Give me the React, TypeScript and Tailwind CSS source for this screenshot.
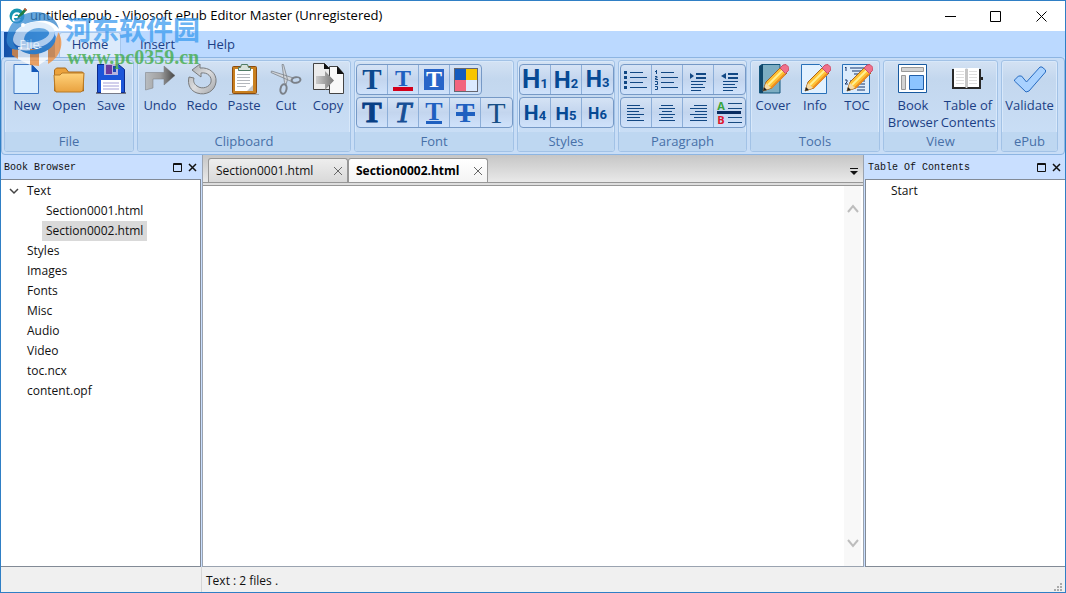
import type { ReactNode } from "react";

const icons: Record<string, ReactNode> = {
  New: (
    <>
      <path d="M3 1.500h17.500l7 7V30.500H3z" fill="#d9edff" stroke="#3f78c4" />
      <path d="M20.500 1v8H28z" fill="#1458b8" />
    </>
  ),
  Open: (
    <>
      <path d="M1.500 28V7l2-2h9l3 4h14l1 2v17z" fill="#eba23c" stroke="#a8691c" />
      <path d="M1 12h6l2-2h22l-1 17-2 2H3l-1-2z" fill="url(#folder)" stroke="#b87a26" />
    </>
  ),
  Save: (
    <>
      <path d="M1 30h30" stroke="#777b88" strokeWidth="2" />
      <path d="M2.500 1.500h21l6 5V29.500h-27z" fill="#1c56d9" stroke="#0b2a8c" />
      <path d="M9 1h14v11H9z" fill="#b8b5df" />
      <path d="M11 2h6v9h-6z" fill="#6c3b9e" />
      <path d="M18 3h3v6h-3z" fill="#1c48b7" />
      <path d="M6 17h20v13H6z" fill="#fff" />
      <path d="M8 20h16M8 23h16M8 26h16" stroke="#a5a0d8" />
    </>
  ),
  Undo: (
    <path d="M1.500 27V9.500H20V3l11 9.500L20 22v-6H9v9z" fill="url(#steel)" stroke="#76797c" strokeWidth=".5" />
  ),
  Redo: (
    <path d="M14 1 6 7l9 7v-4c7-1 11 4 10 9s-9 8-14 4c-3-2-4-5-3-8l-5-1c-2 8 2 14 8 16 9 3 18-2 19-11S23 4 14 5z" fill="url(#ring)" stroke="#797b7d" />
  ),
  Paste: (
    <>
      <path d="M1 31.500h30" stroke="#9ba9b8" />
      <rect x="4.500" y="3.500" width="24" height="27" rx="1" fill="#c9801f" stroke="#8b4c10" />
      <path d="M7 6h18v22H7z" fill="#fff" />
      <path d="M9 11.500h13M9 14.500h13M9 17.500h13M9 20.500h13M9 23.500h9" stroke="#b4b8bd" />
      <path d="M10.500 4.500h2l1-3h6l1 3h2v3h-12z" fill="#d8e1db" stroke="#4f7c64" />
      <path d="m19 28 6-6v6z" fill="#c4c7cb" />
    </>
  ),
  Cut: (
    <>
      <path d="M12 1.500h1.500l4 15-1.500 5-1.500-2zM1.500 8l22 7-2 3.500L1 9.500z" fill="#d2d6db" stroke="#7e848c" strokeWidth=".8" />
      <ellipse cx="26" cy="17" rx="4.500" ry="2.800" fill="none" stroke="#7b8189" strokeWidth="2" transform="rotate(-8 26 17)" />
      <ellipse cx="13.500" cy="26" rx="3" ry="4.800" fill="none" stroke="#7b8189" strokeWidth="2" transform="rotate(12 13.500 26)" />
    </>
  ),
  Copy: (
    <>
      <path d="M1.500.500h11l6 6v20h-17z" fill="#ececec" stroke="#444" />
      <path d="M17.500 3.500h8l6 7v20h-14z" fill="#f8f8f8" stroke="#444" />
      <path d="M25 3v8h7z" fill="#111" />
      <path d="M12 0v6h6z" fill="#111" />
      <path d="M4 13h9V8l9 9.500-9 9.500v-6H4z" fill="url(#mid)" />
    </>
  ),
  Cover: (
    <>
      <path d="M2.500 3 5 1.500h18V30H2.500z" fill="#7cadc2" stroke="#15567c" />
      <path d="M3 3 6 1v29H3z" fill="#10476a" />
      <use href="#pencil" />
    </>
  ),
  Info: (
    <>
      <path d="M2.500 1.500h18l7 7v22h-25z" fill="#e2f1ff" stroke="#2870b8" />
      <use href="#pencil" />
    </>
  ),
  TOC: (
    <>
      <path d="M1.500 1.500h27v29h-27z" fill="#dcecfc" stroke="#2870b8" />
      <path d="M9 5h15M11 8h12M13 11h10M9 18h15M12 21h12M14 24h10M16 27h8" stroke="#15356c" />
      <path d="m4 5 1-1v4M4 17h2v2l-2 2h3" fill="none" stroke="#15356c" />
      <use href="#pencil" />
    </>
  ),
  "Book Browser": (
    <>
      <path d="M1.500 1.500h28v28h-28z" fill="#fff" stroke="#17599f" />
      <path d="M4.500 4.500h22v4h-22zM4.500 12.500h4v14h-4z" fill="#d3d3d3" stroke="#999" />
      <path d="M12.500 12.500h14v14h-14z" fill="#8cc4ff" stroke="#225fa8" />
    </>
  ),
  "Table of Contents": (
    <>
      <path d="M0 6h29v20H0z" fill="#292929" />
      <path d="M2 5h11l1.500 1L16 5h11v19H16l-1.500 1-1.500-1H2z" fill="#fff" />
      <path d="M13 6h3v18h-3z" fill="#c6c6c6" />
      <path d="M4 8.500h8M4 11.500h8M4 14.500h8M4 17.500h8M4 20.500h8M17 8.500h8M17 11.500h8M17 14.500h8M17 17.500h8M17 20.500h8" stroke="#dedede" />
      <path d="M29 14h2v3h-2z" fill="#222" />
    </>
  ),
  Validate: (
    <path d="m.500 17 4-4h3l5 6L26 4h2l3.500 3v2L15 28l-3 1L.500 18z" fill="#a9d2ff" stroke="#276bc0" />
  ),
};

function Defs() {
  return (
    <svg className="absolute size-0" aria-hidden="true">
      <defs>
        <linearGradient id="folder" x2="0" y2="1"><stop stopColor="#ffd27b" /><stop offset="1" stopColor="#e9a23f" /></linearGradient>
        <linearGradient id="steel" x2="1" y2="0"><stop stopColor="#b8bcc0" /><stop offset=".5" stopColor="#a0a0a0" /><stop offset="1" stopColor="#454545" /></linearGradient>
        <linearGradient id="ring" x2="1" y2="1"><stop stopColor="#a5a8ab" /><stop offset=".5" stopColor="#dcdddf" /><stop offset="1" stopColor="#a3a5a8" /></linearGradient>
        <linearGradient id="mid" x2="1" y2="0"><stop stopColor="#ccc" /><stop offset="1" stopColor="#777" /></linearGradient>
        <linearGradient id="ball" x2="1" y2="1"><stop stopColor="#3a93dc" /><stop offset="1" stopColor="#2b76bd" /></linearGradient>
        <g id="pencil">
          <path d="m6 28 3-9L24 4l6 6-15 15z" fill="#ffc235" stroke="#a76520" />
          <path d="m11 22 15-15" stroke="#fff093" strokeWidth="2" />
          <path d="m14 25 14-14" stroke="#ed8f22" strokeWidth="2" />
          <path d="m23 5 3-3 3-.500 3 3-.500 3-3 3z" fill="#f0708b" stroke="#c94e68" />
          <path d="m6 28 3-8 5 5z" fill="#f4dba8" />
          <path d="m6 28 1-4 3 3z" fill="#222" />
        </g>
      </defs>
    </svg>
  );
}

function Tool({ name, wide = false }: { name: string; wide?: boolean }) {
  return (
    <button className={`flex flex-col items-center ${wide ? "w-[55px]" : "w-[42px]"}`}>
      <svg viewBox="0 0 32 32" className="size-8">{icons[name]}</svg>
      <span className="mt-0.5 text-center text-[13px] leading-[17px] text-[#1b3f85]">{name}</span>
    </button>
  );
}

function Group({ title, className, children }: { title: string; className: string; children: ReactNode }) {
  return (
    <section className={`flex shrink-0 flex-col overflow-hidden rounded-[3px] border border-[#a2c2e6] bg-linear-to-b from-[#d4e2f3] from-0% via-[#c3d7ee] via-20% to-[#cbe0f8] shadow-[inset_0_0_0_1px_#d8e8fa] ${className}`}>
      <div className="flex min-h-0 flex-1 justify-center pt-0.5">{children}</div>
      <h2 className="h-[19px] shrink-0 bg-[#bed7f1] text-center text-[13px] leading-[19px] text-[#4770a8]">{title}</h2>
    </section>
  );
}

function Strip({ items }: { items: { label: string; view: ReactNode }[] }) {
  return (
    <div className="flex h-[31px] w-fit divide-x divide-[#8caed8] overflow-hidden rounded-[4px] border border-[#7699c6] bg-linear-to-b from-[#d5e3f5] via-[#c3d5ee] to-[#cfe2fb]">
      {items.map((i) => (
        <button key={i.label} aria-label={i.label} className="flex w-[31px] items-center justify-center">{i.view}</button>
      ))}
    </div>
  );
}

function Strips({ rows }: { rows: { label: string; view: ReactNode }[][] }) {
  return (
    <div className="flex w-full flex-col gap-0.5 px-px pt-px">
      {rows.map((r) => <Strip key={r[0].label} items={r} />)}
    </div>
  );
}

const serif = "font-['Liberation_Serif',serif]";
const glyph = (cls: string) => <span className={`${serif} leading-none ${cls}`}>T</span>;
const fontRows = [
  [
    { label: "Font", view: glyph("text-[29px] font-bold text-[#0d4a8f]") },
    { label: "Text colour", view: <span className="flex flex-col items-center"><span className={`${serif} text-[24px] leading-[18px] font-bold text-[#1f60c0]`}>T</span><i className="h-1 w-5 bg-[#d3001b]" /></span> },
    { label: "Highlight", view: <span className={`${serif} flex h-[21px] w-[20px] items-center justify-center bg-[#2865c8] text-[24px] leading-[21px] font-bold text-white`}>T</span> },
    { label: "Palette", view: <svg viewBox="0 0 24 24" className="size-6"><path d="M0 0h24v24H0z" fill="#65666f" /><path d="M1 1h11v11H1z" fill="#155bbd" /><path d="M12 1h11v11H12z" fill="#f7c500" /><path d="M1 12h11v11H1z" fill="#f2647f" /><path d="M12 12h11v11H12z" fill="#dceaff" /></svg> },
  ],
  [
    { label: "Bold", view: glyph("text-[29px] font-bold text-[#073f85] [-webkit-text-stroke:1px_#073f85]") },
    { label: "Italic", view: glyph("text-[29px] italic text-[#174f96] [-webkit-text-stroke:1px_#174f96]") },
    { label: "Underline", view: <span className="flex flex-col items-center"><span className={`${serif} text-[26px] leading-[19px] font-bold text-[#1f60c0]`}>T</span><i className="h-[3px] w-4 bg-[#1f60c0]" /></span> },
    { label: "Strikethrough", view: <span className="relative flex justify-center">{glyph("text-[28px] font-bold text-[#1f60c0]")}<i className="absolute top-[13px] h-1 w-[19px] bg-[#1f60c0]" /></span> },
    { label: "Plain", view: glyph("text-[30px] text-[#174f86]") },
  ],
];

const heading = (n: number, size: string) => (
  <span className="flex items-baseline pt-1 font-['Roboto',sans-serif] leading-6 font-bold text-[#064994]">
    <span className={size}>H</span><span className="text-[13px]">{n}</span>
  </span>
);
const styleRows = [
  [1, 2, 3].map((n) => ({ label: `Heading ${n}`, view: heading(n, ["text-[26px]", "text-[24px]", "text-[23px]"][n - 1]) })),
  [4, 5, 6].map((n) => ({ label: `Heading ${n}`, view: heading(n, ["text-[21px]", "text-[19px]", "text-[16px]"][n - 4]) })),
];

const lines = (d: string, extra?: ReactNode) => (
  <svg viewBox="0 0 26 24" className="h-6 w-[26px]" fill="none" stroke="#114783">
    <path d={d} />{extra}
  </svg>
);
const paraRows = [
  [
    { label: "Bullets", view: lines("M7 4.500h13M7 9.500h17M7 14.500h13M7 19.500h17", <path d="M1 4.500h3M1 9.500h3M1 14.500h3M1 19.500h3" strokeWidth="3" />) },
    { label: "Numbering", view: lines("M7 4.500h13M7 9.500h17M7 14.500h13M7 19.500h17", <path d="M1 3.500h1.500V2m0 0v4M1 8.500h2v1.500H1.500v1.500H4M1 13.500h2.500v3H1M1 18.500h2.500v3H1" />) },
    { label: "Indent", view: lines("M6 13.500h15M6 16.500h12M6 19.500h14M6 22.500h10", <><path d="M11 6h10M11 10h10" strokeWidth="2" /><path d="M5 5v6l4-3z" fill="#114783" stroke="none" /></>) },
    { label: "Outdent", view: lines("M6 13.500h15M6 16.500h12M6 19.500h14M6 22.500h10", <><path d="M11 6h10M11 10h10" strokeWidth="2" /><path d="M9 5v6L4 8z" fill="#114783" stroke="none" /></>) },
  ],
  [
    { label: "Align left", view: lines("M4 4.500h13M4 7.500h17M4 10.500h12M4 13.500h17M4 16.500h13M4 19.500h17") },
    { label: "Align centre", view: lines("M7 4.500h12M5 7.500h16M8 10.500h10M5 13.500h16M7 16.500h12M5 19.500h16") },
    { label: "Align right", view: lines("M9 4.500h13M5 7.500h17M10 10.500h12M5 13.500h17M9 16.500h13M5 19.500h17") },
    {
      label: "Spacing",
      view: (
        <span className="flex flex-col font-['Open_Sans',sans-serif] text-[11px] leading-[11px] font-bold">
          <span className="flex items-center gap-[3px] text-[#37a43b]">A<i className="h-[6px] w-3.5 border-y border-[#174a80]" /></span>
          <i className="h-[3px] w-6 bg-[#092c60]" />
          <span className="flex items-center gap-[3px] text-[#e0172d]">B<i className="h-[6px] w-3.5 border-y border-[#174a80]" /></span>
        </span>
      ),
    },
  ],
];

function PanelHeader({ title }: { title: string }) {
  return (
    <div className="flex h-6 shrink-0 items-center bg-[#c9dfff] pr-1 pl-[3px]">
      <h2 className="flex-1 font-['Liberation_Mono',monospace] text-[10px] text-[#111]">{title}</h2>
      <button aria-label={`Float ${title}`} className="mr-1.5"><svg viewBox="0 0 9 9" className="size-[9px]" fill="none" stroke="#111"><path d="M.500.500h8v8h-8zM0 1.500h9" /></svg></button>
      <button aria-label={`Close ${title}`}><svg viewBox="0 0 9 9" className="size-[9px]" stroke="#111" strokeWidth="1.500"><path d="m1 1 7 7M8 1 1 8" /></svg></button>
    </div>
  );
}

function FileTab({ name, active = false }: { name: string; active?: boolean }) {
  return (
    <div className={`flex h-6 w-[140px] items-center justify-between rounded-t-[3px] border border-b-0 border-[#979797] pr-1 pl-[7px] ${active ? "bg-linear-to-b from-white to-[#f4f4f4] font-bold text-black" : "bg-linear-to-b from-[#eeeeee] to-[#d9d9d9]"}`}>
      <button className="text-[12px] whitespace-nowrap">{name}</button>
      <button aria-label={`Close ${name}`}><svg viewBox="0 0 10 10" className="size-2.5" stroke="#666"><path d="m1 1 8 8M9 1 1 9" /></svg></button>
    </div>
  );
}

function Watermark() {
  return (
    <div className="pointer-events-none absolute top-2.5 left-0 flex items-start opacity-75">
      <svg viewBox="0 0 64 60" className="h-[60px] w-16 shrink-0">
        <path d="M11 38h6v10l-6-4zM29 38h9v17l-9-1z" fill="#f08b35" />
        <path d="M17 36h12v18l-12-6zM38 36h9v12l-9 6z" fill="#fff" />
        <path d="M47 34c6-3 10-8 10-13 7 10 3 25-10 32z" fill="#f08b35" />
        <path d="M6 26C8 10 21 1 35 1c13 0 21 8 23 17-5-7-12-9-20-8C22 11 12 19 12 29c0 5 3 8 7 10C10 39 4 35 6 26z" fill="url(#ball)" />
        <path d="M12 29c0-10 12-18 24-18 10 0 17 4 18 11-2 9-12 15-23 15-9 0-19-2-19-8z" fill="#d7e9fa" />
        <path d="M23 28c1-7 8-11 15-11 6 0 11 3 10 6-3 7-24 12-25 5z" fill="#3b8fd8" />
        <path d="M19 39c14 2 30-3 36-15 1 9-7 17-19 19-7 1-13-1-17-4z" fill="url(#ball)" />
        <circle cx="22" cy="14" r="2" fill="#fff" />
      </svg>
      <div className="flex flex-col">
        <span className="font-['Noto_Sans_CJK_SC',sans-serif] text-[27px] leading-9 font-bold whitespace-nowrap text-[#3b9cf0]">河东软件园</span>
        <span className={`${serif} pl-0.5 text-[20px] leading-5 font-bold text-[#3ba941]`}>www.pc0359.cn</span>
      </div>
    </div>
  );
}

export default function App() {
  return (
    <div className="relative flex h-screen flex-col overflow-hidden border border-[#2f7fc5] bg-[#c9dfff] font-['Open_Sans','Noto_Sans_CJK_SC',sans-serif] text-[12px] text-[#111]">
      <Defs />
      <header className="flex h-[30px] shrink-0 items-center bg-white pl-2">
        <svg viewBox="0 0 18 18" className="size-[18px]">
          <circle cx="8" cy="9" r="7.500" fill="#1695b0" />
          <path d="M4 10h7c0-5-6-5-7 0s4 5 7 2" fill="none" stroke="#fff" strokeWidth="2" />
          <path d="m8 13 1-4 7-8 2 2-7 8z" fill="#217e44" />
          <path d="m15 2 1-1 2 2-1 1z" fill="#e14b31" />
        </svg>
        <h1 className="ml-[3px] flex-1 text-[13px] text-black">untitled.epub - Vibosoft ePub Editor Master (Unregistered)</h1>
        <button aria-label="Minimize" className="flex w-[45px] justify-center"><svg viewBox="0 0 11 11" className="size-[11px]" stroke="#000"><path d="M0 5.500h11" /></svg></button>
        <button aria-label="Maximize" className="flex w-[45px] justify-center"><svg viewBox="0 0 11 11" className="size-[11px]" fill="none" stroke="#000"><path d="M.500.500h10v10H.500z" /></svg></button>
        <button aria-label="Close" className="flex w-[47px] justify-center"><svg viewBox="0 0 11 11" className="size-[11px]" stroke="#000"><path d="m.500.500 10 10M10.500.500l-10 10" /></svg></button>
      </header>

      <nav className="flex h-[26px] shrink-0 items-end bg-[#bbd9ff] pl-[3px] text-[13px] text-[#1b3f85]">
        <button className="h-[25px] w-[51px] bg-linear-to-r from-[#1450a8] to-[#3f86d6] text-white">File</button>
        <button className="ml-1 h-[25px] w-[62px] rounded-t-[3px] border border-b-0 border-[#a5c6ec] bg-[#dceafb]">Home</button>
        <button className="h-[25px] w-[73px]">Insert</button>
        <button className="h-[25px] w-[54px]">Help</button>
      </nav>

      <div className="flex h-[98px] shrink-0 gap-[3px] rounded-[4px] border border-[#8db5e2] bg-[#c8ddf6] p-0.5">
        <Group title="File" className="w-[130px]"><Tool name="New" /><Tool name="Open" /><Tool name="Save" /></Group>
        <Group title="Clipboard" className="w-[214px]"><Tool name="Undo" /><Tool name="Redo" /><Tool name="Paste" /><Tool name="Cut" /><Tool name="Copy" /></Group>
        <Group title="Font" className="w-[160px]"><Strips rows={fontRows} /></Group>
        <Group title="Styles" className="w-[98px]"><Strips rows={styleRows} /></Group>
        <Group title="Paragraph" className="w-[129px]"><Strips rows={paraRows} /></Group>
        <Group title="Tools" className="w-[130px]"><Tool name="Cover" /><Tool name="Info" /><Tool name="TOC" /></Group>
        <Group title="View" className="w-[115px]"><Tool wide name="Book Browser" /><Tool wide name="Table of Contents" /></Group>
        <Group title="ePub" className="w-[57px]"><Tool wide name="Validate" /></Group>
      </div>

      <main className="flex min-h-0 flex-1">
        <aside className="flex w-[200px] shrink-0 flex-col">
          <PanelHeader title="Book Browser" />
          <ul className="flex-1 border-y border-r border-[#828a96] bg-white pt-px leading-5">
            <li>
              <button className="flex items-center pl-2"><svg viewBox="0 0 10 10" className="mr-2 size-2.5" fill="none" stroke="#444" strokeWidth="1.500"><path d="m1 3 4 4 4-4" /></svg>Text</button>
              <ul className="pl-[41px]">
                <li><button className="px-1">Section0001.html</button></li>
                <li><button className="bg-[#d9d9d9] px-1">Section0002.html</button></li>
              </ul>
            </li>
            {["Styles", "Images", "Fonts", "Misc", "Audio", "Video", "toc.ncx", "content.opf"].map((n) => (
              <li key={n}><button className="pl-[26px]">{n}</button></li>
            ))}
          </ul>
        </aside>

        <section className="ml-px flex min-w-0 flex-1 flex-col border border-t-0 border-[#9aa3b0] bg-white">
          <div className="flex h-7 shrink-0 items-end border-b border-[#979797] bg-linear-to-b from-[#c6c6c6] to-[#e9e9e9] pl-[5px]">
            <FileTab name="Section0001.html" />
            <FileTab name="Section0002.html" active />
            <button aria-label="All tabs" className="mr-[5px] mb-1.5 ml-auto"><svg viewBox="0 0 8 8" className="size-2"><path d="M0 0h8v1H0zM0 3h8L4 7z" fill="#111" /></svg></button>
          </div>
          <div className="h-[3px] shrink-0 border-b border-[#979797] bg-[#dedede]" />
          <div className="flex min-h-0 flex-1">
            <textarea aria-label="Editor" className="flex-1 resize-none bg-white outline-none" />
            <div className="mr-0.5 flex w-[17px] flex-col items-center justify-between bg-[#f8f8f8] pt-[18px] pb-[18px]">
              <svg viewBox="0 0 12 9" className="h-[9px] w-3" fill="none" stroke="#bdbdbd" strokeWidth="2"><path d="m1 8 5-6 5 6" /></svg>
              <svg viewBox="0 0 12 9" className="h-[9px] w-3" fill="none" stroke="#bdbdbd" strokeWidth="2"><path d="m1 1 5 6 5-6" /></svg>
            </div>
          </div>
        </section>

        <aside className="ml-px flex w-[200px] shrink-0 flex-col">
          <PanelHeader title="Table Of Contents" />
          <ul className="flex-1 border-y border-l border-[#828a96] bg-white pt-px leading-5"><li><button className="pl-[25px]">Start</button></li></ul>
        </aside>
      </main>

      <footer className="flex h-[25px] shrink-0 items-center bg-[#f0f0f0]">
        <div className="h-full w-[201px] border-r border-[#d5d5d5]" />
        <span className="flex-1 pt-0.5 pl-1">Text : 2 files .</span>
        <svg viewBox="0 0 9 9" className="mr-0.5 size-[9px] self-end" fill="#aaa"><path d="M6 0h2v2H6zM3 3h2v2H3zM6 3h2v2H6zM0 6h2v2H0zM3 6h2v2H3zM6 6h2v2H6z" /></svg>
      </footer>
      <Watermark />
    </div>
  );
}
